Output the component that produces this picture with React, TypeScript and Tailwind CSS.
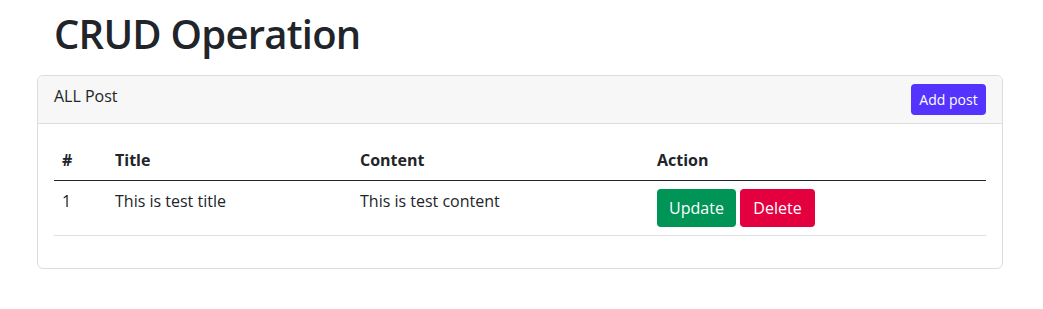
import React from 'react';

const posts = [{ id: 1, title: 'This is test title', content: 'This is test content' }];

export default function App() {
  return (
    <div className="min-h-screen bg-white text-[#212529]" style={{ fontFamily: '"Open Sans", sans-serif' }}>
      <div className="w-[966px] ml-[37px] pt-[10px]">
        <h1 className="pl-[17px] text-[40px] leading-[48px] font-semibold tracking-[-0.75px] mb-[17px]">CRUD Operation</h1>

        {/* Card */}
        <div className="border border-[#dcdcdc] rounded-[6px] overflow-hidden">
          <div className="flex justify-between items-start px-4 py-2 bg-[#f7f7f7] border-b border-[#dcdcdc]">
            <span className="text-base leading-6">ALL Post</span>
            <button className="h-[31px] w-[75px] rounded-[4px] bg-[#5533ff] text-white text-sm">Add post</button>
          </div>
          <div className="p-4">
            <table className="w-full mb-4 text-base border-collapse">
              <thead>
                <tr className="border-b border-[#212529]">
                  <th className="w-[53px] text-left font-bold p-2 leading-6">#</th>
                  <th className="w-[245px] text-left font-bold p-2 leading-6">Title</th>
                  <th className="w-[297px] text-left font-bold p-2 leading-6">Content</th>
                  <th className="text-left font-bold p-2 leading-6">Action</th>
                </tr>
              </thead>
              <tbody>
                {posts.map((p) => (
                  <tr key={p.id} className="border-b border-[#dee2e6]">
                    <td className="p-2 align-top leading-6">{p.id}</td>
                    <td className="p-2 align-top leading-6">{p.title}</td>
                    <td className="p-2 align-top leading-6">{p.content}</td>
                    <td className="p-2">
                      <div className="flex gap-1">
                        <button className="h-[38px] w-[79px] rounded-[4px] bg-[#009456] text-white">Update</button>
                        <button className="h-[38px] w-[75px] rounded-[4px] bg-[#e4003f] text-white">Delete</button>
                      </div>
                    </td>
                  </tr>
                ))}
              </tbody>
            </table>
          </div>
        </div>
      </div>
    </div>
  );
}
